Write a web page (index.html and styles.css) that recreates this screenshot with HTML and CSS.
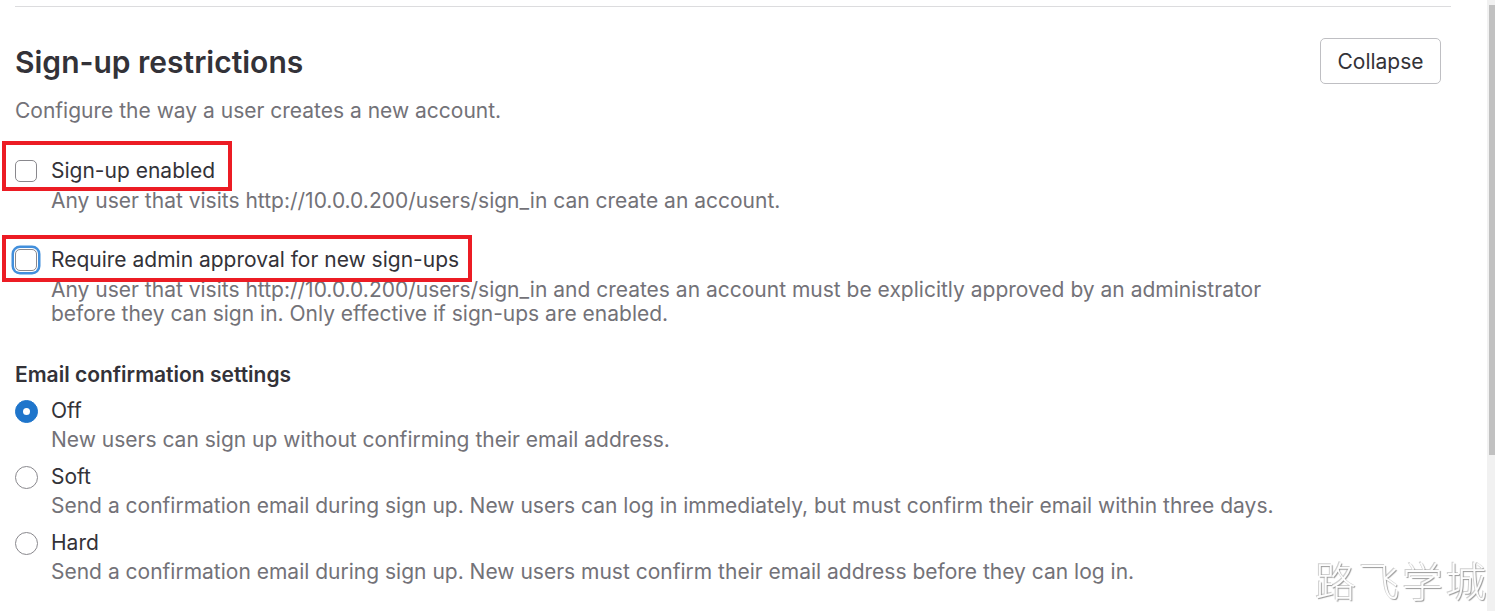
FILE: index.html
```html
<!DOCTYPE html>
<html lang="en">
<head>
<meta charset="utf-8">
<title>Sign-up restrictions</title>
<link rel="stylesheet" href="styles.css">
</head>
<body>
<div class="page">
  <section class="settings">
    <div class="settings-header">
      <h4 class="settings-title">Sign-up restrictions</h4>
      <button class="btn" type="button">Collapse</button>
    </div>
    <p class="settings-desc">Configure the way a user creates a new account.</p>

    <div class="form-check first">
      <span class="annot annot-1"></span>
      <label class="check-row">
        <span class="checkbox"></span>
        <span class="check-label">Sign-up enabled</span>
      </label>
      <p class="help">Any user that visits http://10.0.0.200/users/sign_in can create an account.</p>
    </div>

    <div class="form-check second">
      <span class="annot annot-2"></span>
      <label class="check-row">
        <span class="checkbox focused"></span>
        <span class="check-label">Require admin approval for new sign-ups</span>
      </label>
      <p class="help">Any user that visits http://10.0.0.200/users/sign_in and creates an account must be explicitly approved by an administrator<br>before they can sign in. Only effective if sign-ups are enabled.</p>
    </div>

    <div class="radio-group">
      <div class="group-label">Email confirmation settings</div>
      <div class="form-radio">
        <label class="check-row">
          <span class="radio checked"></span>
          <span class="check-label">Off</span>
        </label>
        <p class="help">New users can sign up without confirming their email address.</p>
      </div>
      <div class="form-radio">
        <label class="check-row">
          <span class="radio"></span>
          <span class="check-label">Soft</span>
        </label>
        <p class="help">Send a confirmation email during sign up. New users can log in immediately, but must confirm their email within three days.</p>
      </div>
      <div class="form-radio">
        <label class="check-row">
          <span class="radio"></span>
          <span class="check-label">Hard</span>
        </label>
        <p class="help">Send a confirmation email during sign up. New users must confirm their email address before they can log in.</p>
      </div>
    </div>
  </section>
</div>
<div class="watermark">路飞学城</div>
<div class="scrollbar"><div class="scrollbar-thumb"></div></div>
</body>
</html>
```
FILE: styles.css
```css
html, body {
  margin: 0;
  padding: 0;
  background: #ffffff;
  overflow: hidden;
}
body {
  font-family: Inter, "Noto Sans", sans-serif;
  color: #333238;
  font-size: 21px;
  line-height: 24px;
}
.page {
  padding: 6px 0 0 15px;
  width: 1436px;
}
.settings {
  border-top: 1px solid #dcdcde;
  padding-top: 31px;
}
.settings-header {
  display: flex;
  align-items: center;
  justify-content: space-between;
  padding-right: 10px;
  height: 46px;
}
.settings-title {
  margin: 2px 0 0;
  font-size: 30px;
  line-height: 34px;
  font-weight: 600;
  color: #333238;
}
.btn {
  height: 46px;
  width: 121px;
  border: 1px solid #bfbfc3;
  border-radius: 5px;
  background: #ffffff;
  color: #333238;
  font-family: Inter, "Noto Sans", sans-serif;
  font-size: 21px;
  padding: 0;
}
.settings-desc {
  margin: 15px 0 0;
  color: #737278;
}
.form-check {
  position: relative;
}
.form-check.first {
  margin-top: 36px;
}
.form-check.second {
  margin-top: 35px;
}
.check-row {
  display: flex;
  align-items: center;
  height: 24px;
}
.check-label {
  margin-left: 14px;
  color: #333238;
}
.checkbox {
  box-sizing: border-box;
  width: 22px;
  height: 22px;
  border: 1px solid #89888d;
  border-radius: 5px;
  background: #ffffff;
}
.checkbox.focused {
  box-shadow: 0 0 0 1px #ffffff, 0 0 0 3.5px #428fdc;
}
.help {
  margin: 6px 0 0;
  padding-left: 36px;
  color: #737278;
}
.annot {
  position: absolute;
  box-sizing: border-box;
  border: 4px solid #ec1c24;
  left: -13px;
}
.annot-1 {
  top: -18px;
  width: 230px;
  height: 50px;
}
.annot-2 {
  top: -13px;
  width: 470px;
  height: 47px;
}
.radio-group {
  margin-top: 37px;
}
.group-label {
  font-weight: 600;
  color: #333238;
}
.form-radio {
  margin-top: 13px;
}
.group-label + .form-radio {
  margin-top: 12px;
}
.form-radio .check-label {
  margin-left: 13px;
}
.form-radio .help {
  margin-top: 5px;
}
.radio {
  box-sizing: border-box;
  width: 23px;
  height: 23px;
  border: 1px solid #89888d;
  border-radius: 50%;
  background: #ffffff;
  position: relative;
}
.radio.checked {
  border-color: #1f75cb;
  background: #1f75cb;
}
.radio.checked::after {
  content: "";
  position: absolute;
  left: 50%;
  top: 50%;
  width: 7px;
  height: 7px;
  margin: -3.5px 0 0 -3.5px;
  border-radius: 50%;
  background: #ffffff;
}
.watermark {
  position: fixed;
  left: 1315px;
  top: 553px;
  font-family: "Noto Sans CJK SC", sans-serif;
  font-weight: 300;
  font-size: 41px;
  line-height: 52px;
  letter-spacing: 2.5px;
  color: #fdfdfd;
  text-shadow: 1px 1px 1px #9a9a9a, -1px -1px 0 #d0d0d0;
}
.scrollbar {
  position: fixed;
  top: 0;
  right: 0;
  width: 8px;
  height: 100%;
  background: #f1f1f1;
}
.scrollbar-thumb {
  margin: 5px 0 0 2px;
  width: 6px;
  height: 450px;
  background: #c1c1c1;
}
```
